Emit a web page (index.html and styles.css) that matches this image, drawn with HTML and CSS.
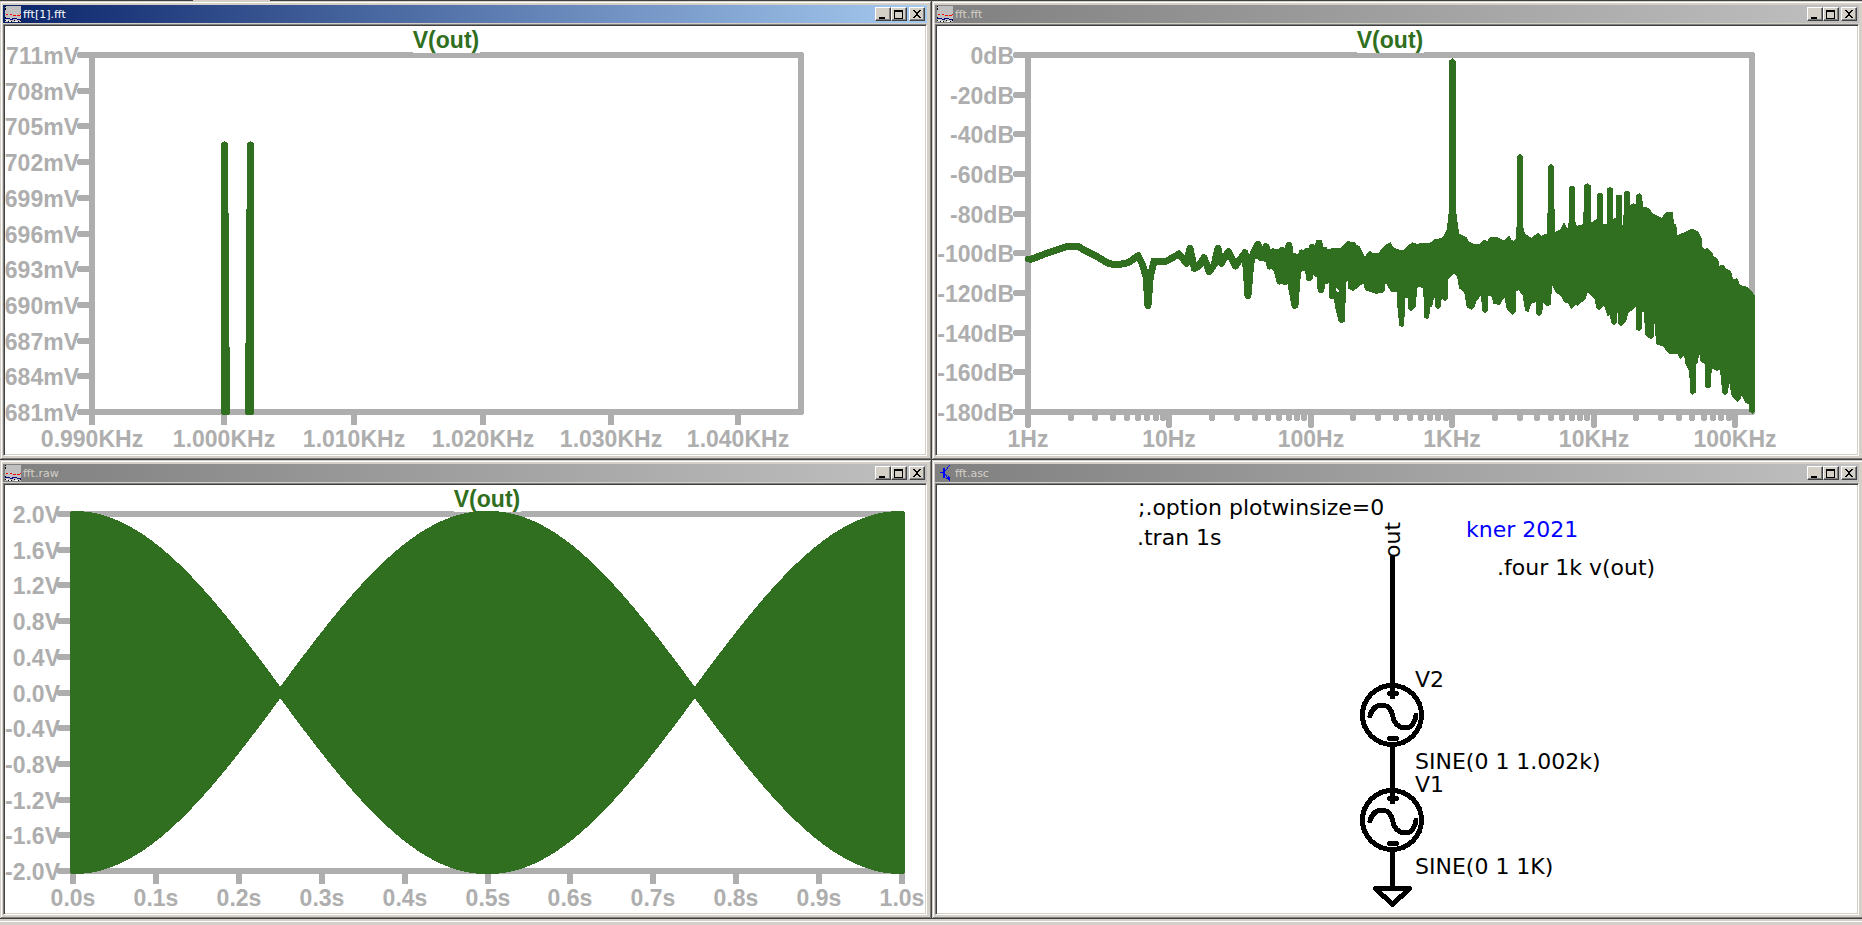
FILE: index.html
```html
<!DOCTYPE html>
<html lang="en">
<head>
<meta charset="utf-8">
<title>fft</title>
<link rel="stylesheet" href="styles.css">
</head>
<body>
<svg class="defs" aria-hidden="true">
  <symbol id="icon-plot" viewBox="0 0 16 16" shape-rendering="crispEdges">
    <path fill="#c0c0c0" d="M0 0h16v16H0z"/>
    <path fill="#000" d="M0 0h1v1H0zM0 2h1v2H0zM0 11h1v1H0zM0 14h1v1H0zM3 15h1v1H3zM6 15h1v1H6zM9 14h1v1H9zM13 15h1v1h-1zM15 14h1v1h-1z"/>
    <path fill="#f00" d="M1 8h2v1H1zM5 8h2v1H5zM8 9h3v1H8zM12 9h3v1h-3zM15 8h1v1h-1z"/>
    <path fill="#000080" d="M0 12h5v1H0zM5 13h3v1H5zM7 12h5v1H7zM12 13h4v1h-4z"/>
    <path fill="#fff" d="M1 14h2v1H1zM4 15h2v1H4zM10 15h3v1h-3z"/>
  </symbol>
  <symbol id="icon-schematic" viewBox="0 0 16 16" shape-rendering="crispEdges">
    <path fill="#00f" d="M6 3h2v10H6zM3 7h3v1H3zM8 5h1v1H8zM9 4h1v1H9zM10 2h1v2h-1zM11 1h1v1h-1zM12 0h1v1h-1zM8 9h1v1H8zM9 10h1v2H9zM10 12h1v1h-1zM11 11h1v2h-1zM9 13h4v1H9zM11 14h2v1h-2zM12 15h1v1h-1zM12 12h1v1h-1z"/>
  </symbol>
  <symbol id="glyph-min" viewBox="0 0 14 12" shape-rendering="crispEdges">
    <path d="M3 9h6v2H3z"/>
  </symbol>
  <symbol id="glyph-max" viewBox="0 0 14 12" shape-rendering="crispEdges">
    <path fill-rule="evenodd" d="M2 2h9v9H2zM3 4v6h7V4z"/>
  </symbol>
  <symbol id="glyph-close" viewBox="0 0 14 12" shape-rendering="crispEdges">
    <path d="M3 2h2v1h1v1h2V3h1V2h2v1h-1v1H9v1H8v2h1v1h1v1h1v1H9V9H8V8H6v1H5v1H3V9h1V8h1V7h1V5H5V4H4V3H3z"/>
  </symbol>
</svg>

<div class="desktop">
  <div class="edge"></div>
  <main class="windows">
    <section class="window active" aria-label="fft[1].fft">
      <header class="titlebar">
        <svg class="icon"><use href="#icon-plot"/></svg>
        <h2 class="name">fft[1].fft</h2>
        <button type="button" class="control" aria-label="Minimize"><svg><use href="#glyph-min"/></svg></button>
        <button type="button" class="control" aria-label="Maximize"><svg><use href="#glyph-max"/></svg></button>
        <button type="button" class="control close" aria-label="Close"><svg><use href="#glyph-close"/></svg></button>
      </header>
      <div class="client"><svg class="plot" id="plot-zoomed" viewBox="5 26 920 428"></svg></div>
    </section>

    <section class="window" aria-label="fft.fft">
      <header class="titlebar">
        <svg class="icon"><use href="#icon-plot"/></svg>
        <h2 class="name">fft.fft</h2>
        <button type="button" class="control" aria-label="Minimize"><svg><use href="#glyph-min"/></svg></button>
        <button type="button" class="control" aria-label="Maximize"><svg><use href="#glyph-max"/></svg></button>
        <button type="button" class="control close" aria-label="Close"><svg><use href="#glyph-close"/></svg></button>
      </header>
      <div class="client"><svg class="plot" id="plot-spectrum" viewBox="937 26 920 428"></svg></div>
    </section>

    <section class="window" aria-label="fft.raw">
      <header class="titlebar">
        <svg class="icon"><use href="#icon-plot"/></svg>
        <h2 class="name">fft.raw</h2>
        <button type="button" class="control" aria-label="Minimize"><svg><use href="#glyph-min"/></svg></button>
        <button type="button" class="control" aria-label="Maximize"><svg><use href="#glyph-max"/></svg></button>
        <button type="button" class="control close" aria-label="Close"><svg><use href="#glyph-close"/></svg></button>
      </header>
      <div class="client"><svg class="plot" id="plot-wave" viewBox="5 485 920 428"></svg></div>
    </section>

    <section class="window" aria-label="fft.asc">
      <header class="titlebar">
        <svg class="icon"><use href="#icon-schematic"/></svg>
        <h2 class="name">fft.asc</h2>
        <button type="button" class="control" aria-label="Minimize"><svg><use href="#glyph-min"/></svg></button>
        <button type="button" class="control" aria-label="Maximize"><svg><use href="#glyph-max"/></svg></button>
        <button type="button" class="control close" aria-label="Close"><svg><use href="#glyph-close"/></svg></button>
      </header>
      <div class="client">
        <svg class="plot schematic" viewBox="937 485 920 428">
          <defs>
            <g id="source">
              <circle cx="1392" cy="715" r="29.5"/>
              <path d="M1392.5 685V697M1389.5 693.5H1396.5M1389.5 738.5H1396.5"/>
              <path d="M1370 716C1372 708 1377 705 1383 705C1390 706 1392 711 1393 717C1394 723 1399 728 1405 728C1411 728 1415 723 1416 715"/>
            </g>
          </defs>
          <g class="wire">
            <path class="straight" d="M1392.5 556V685M1392.5 746V790M1392.5 851V888"/>
            <use href="#source"/>
            <use href="#source" y="105"/>
            <path d="M1375.5 888.5H1409.5L1392.5 904.5Z"/>
          </g>
          <text x="1138" y="515">;.option plotwinsize=0</text>
          <text x="1137" y="545">.tran 1s</text>
          <text class="comment" x="1466" y="537">kner 2021</text>
          <text x="1497" y="575">.four 1k v(out)</text>
          <text transform="translate(1400 558) rotate(-90)">out</text>
          <text x="1415" y="687">V2</text>
          <text x="1415" y="769">SINE(0 1 1.002k)</text>
          <text x="1415" y="792">V1</text>
          <text x="1415" y="874">SINE(0 1 1K)</text>
        </svg>
      </div>
    </section>
  </main>
  <footer class="status"></footer>
</div>
<script src="plots.js"></script>
</body>
</html>
```
FILE: styles.css
```css
* {
  box-sizing: border-box;
}

body {
  margin: 0;
  background: #d4d0c8;
  font-family: "DejaVu Sans", sans-serif;
  overflow: hidden;
}

.defs {
  position: absolute;
  width: 0;
  height: 0;
}

.desktop {
  display: flex;
  flex-direction: column;
  height: 100vh;
  overflow: hidden;
}

.edge {
  flex: none;
  height: 1px;
  background: linear-gradient(to right, #404040 193px, #d4d0c8 193px, #d4d0c8 270px, #404040 270px);
}

.windows {
  flex: 1;
  min-height: 0;
  display: grid;
  grid-template: 1fr 1fr / 1fr 1fr;
  margin-right: -2px;
}

.status {
  flex: none;
  height: 6px;
  border-top: 2px solid #d4d0c8;
  box-shadow: inset 0 1px #fff;
}

.window {
  display: flex;
  flex-direction: column;
  min-width: 0;
  min-height: 0;
  padding: 4px 5px 4px 3px;
  background: #d4d0c8;
  box-shadow: inset -1px -1px #404040, inset 1px 1px #d4d0c8, inset -2px -2px #808080, inset 2px 2px #fff;
}

.titlebar {
  flex: none;
  display: flex;
  align-items: center;
  height: 18px;
  margin-bottom: 1px;
  padding: 0 2px;
  background: linear-gradient(to right, #808080, #c0c0c0);
  color: #d4d0c8;
}

.active .titlebar {
  background: linear-gradient(to right, #0a246a, #a6caf0);
  color: #fff;
}

.icon {
  width: 16px;
  height: 16px;
}

.name {
  flex: 1;
  margin: 0;
  padding: 2px 0 0 2px;
  font-size: 11px;
  font-weight: normal;
  line-height: 16px;
}

.control {
  width: 16px;
  height: 14px;
  padding: 0;
  border: 1px solid;
  border-color: #fff #404040 #404040 #fff;
  background: #d4d0c8;
  box-shadow: inset -1px -1px #808080;
}

.control svg {
  display: block;
  width: 14px;
  height: 12px;
}

.close {
  margin-left: 2px;
}

.client {
  flex: 1;
  min-height: 0;
  border: 1px solid;
  border-color: #808080 #fff #fff #808080;
  background: #fff;
  box-shadow: inset 1px 1px #404040, inset -1px -1px #d4d0c8;
  padding: 1px;
}

.plot {
  display: block;
  width: 100%;
  height: 100%;
}

.axis {
  fill: none;
  stroke: #aeaeae;
  stroke-width: 6px;
  stroke-linejoin: round;
  shape-rendering: crispEdges;
}

.rounded {
  stroke-linecap: round;
}

.label,
.trace-name {
  font: bold 23px "Liberation Sans", sans-serif;
  fill: #aeaeae;
  text-anchor: middle;
}

.label.value {
  text-anchor: end;
}

.trace-name {
  fill: #306e20;
}

.backing {
  fill: #fff;
}

.trace {
  fill: none;
  stroke: #306e20;
  stroke-width: 6px;
  stroke-linejoin: round;
  stroke-linecap: round;
  shape-rendering: crispEdges;
}

.trace.noise {
  stroke-width: 7px;
}

.trace.solid {
  fill: #306e20;
}

.trace.area {
  fill: #306e20;
  stroke: none;
}

.schematic text {
  font-size: 22px;
  fill: #000;
}

.schematic .comment {
  fill: #00f;
}

.wire {
  fill: none;
  stroke: #000;
  stroke-width: 5px;
  stroke-linecap: round;
  stroke-linejoin: round;
  shape-rendering: crispEdges;
}

.straight {
  stroke-linecap: butt;
}
```
FILE: plots.js
```js
const NS = "http://www.w3.org/2000/svg";

function add(parent, tag, cls, attrs, text) {
  const el = document.createElementNS(NS, tag);
  if (cls) el.setAttribute("class", cls);
  for (const key in attrs) el.setAttribute(key, attrs[key]);
  if (text) el.textContent = text;
  parent.appendChild(el);
  return el;
}

function frame(svg, o) {
  add(svg, "path", "axis", { d: `M${o.left} ${o.top}H${o.right}V${o.bottom}H${o.left}Z` });
  const step = (o.bottom - o.top) / (o.values.length - 1);
  o.values.forEach((v, i) => {
    const y = Math.round(o.top + i * step);
    add(svg, "text", "label value", { x: o.labelEnd, y: y + 9 }, v);
    add(svg, "path", "axis rounded", { d: `M${o.tickStart} ${y}H${o.left}` });
  });
  o.marks.forEach(([x, name]) => {
    add(svg, "path", o.log ? "axis rounded" : "axis", { d: `M${x} ${o.bottom}V${o.bottom + 13}` });
    add(svg, "text", "label", { x, y: o.bottom + 35 }, name);
  });
  add(svg, "rect", "backing", { x: o.title - 33, y: o.top - 25, width: 67, height: 23 });
}

function title(svg, x, y) {
  add(svg, "text", "trace-name", { x, y }, "V(out)");
}

const zoomed = document.getElementById("plot-zoomed");
frame(zoomed, {
  left: 92, right: 801, top: 55, bottom: 412, labelEnd: 79, tickStart: 80, title: 446,
  values: [711, 708, 705, 702, 699, 696, 693, 690, 687, 684, 681].map(v => v + "mV"),
  marks: [[92, "0.990KHz"], [224, "1.000KHz"], [354, "1.010KHz"], [483, "1.020KHz"], [611, "1.030KHz"], [738, "1.040KHz"]]
});
add(zoomed, "path", "trace solid", { d: "M224 412V145L224.5 144.5L225 145L227 412ZM248 412L250 145L250.5 144.5L251 145V412Z" });
title(zoomed, 446, 48);

const spectrum = document.getElementById("plot-spectrum");
const decade = 141.4;
for (let d = 0; d < 6; d++) {
  for (let n = 2; n < 10; n++) {
    const x = Math.round(1028 + decade * (d + Math.log10(n)));
    if (x < 1752) add(spectrum, "path", "axis rounded", { d: `M${x} 412V418` });
  }
}
frame(spectrum, {
  left: 1028, right: 1752, top: 55, bottom: 412, labelEnd: 1014, tickStart: 1016, title: 1390, log: true,
  values: [0, -20, -40, -60, -80, -100, -120, -140, -160, -180].map(v => v + "dB"),
  marks: [[1028, "1Hz"], [1169, "10Hz"], [1311, "100Hz"], [1452, "1KHz"], [1594, "10KHz"], [1735, "100KHz"]]
});

// Samples are stored in thirds of a pixel, relative to each block's origin.
function samples(ox, oy, text) {
  return text.trim().split(/\s+/).map(p => {
    const [x, y] = p.split(",").map(Number);
    return (ox + x / 3).toFixed(1) + "," + (oy + y / 3).toFixed(1);
  }).join(" ");
}

add(spectrum, "polyline", "trace noise", { points: samples(1020, 200, `
  26,177 35,177 80,160 140,140 175,140 205,157 235,172 265,190 290,195 325,188 354,167 368,195 378,230
  384,316 391,230 402,183 440,183 477,162 500,190 510,145 523,205 535,200 552,173 568,215 583,193 594,145 604,190
  625,155 646,198 675,158 684,286 692,190 700,160 714,133 722,172 738,140 750,198 760,155 768,198 780,243 786,152
  796,245 807,137 815,265 825,316 832,225 846,159 854,203 862,154 868,233 877,142 890,220 897,129 903,268
  912,150 920,241 936,156 936,286 950,285 958,330 965,358 969,150 985,134 980,226`) });
add(spectrum, "polygon", "trace area", { points: samples(1020, 200,
  "700,150 745,145 800,150 840,165 890,150 990,140 990,235 955,270 890,210 850,210 815,255 785,250 745,190 705,175") });
add(spectrum, "polygon", "trace area", { points: samples(1350, 40, `
  -6,610 0,606 15,607 18,613 30,620 37,635 45,650 52,638 60,631 68,638 85,640 95,625 110,612 122,606 130,622
  145,628 160,632 172,618 188,607 200,611 240,608 256,596 262,598 278,592 290,570 297,510 297,62 307,55 317,62
  318,510 327,580 350,592 356,603 370,612 388,612 402,598 412,603 422,590 440,590 452,597 462,602 477,586
  484,600 490,602 497,597 501,540 501,348 510,342 519,348 520,560 525,582 545,594 564,577 575,587 592,580
  594,378 603,372 611,378 613,490 616,575 632,567 642,547 652,567 657,540 657,442 666,436 675,442 675,540
  680,558 700,552 702,436 712,430 722,436 723,548 740,537 741,462 750,457 759,462 760,552 771,552 771,446
  780,441 789,446 790,537 798,533 798,467 807,463 816,467 816,555 820,555 822,457 831,451 840,457 840,495
  850,490 858,493 859,465 868,460 877,465 878,500 886,500 900,508 908,520 917,525 935,533 943,522 950,517
  968,517 972,550 979,555 982,585 1000,578 1027,566 1045,575 1055,595 1057,620 1063,627 1072,625 1088,640
  1090,648 1105,658 1108,678 1120,673 1128,686 1142,692 1150,718 1162,715 1170,735 1190,740 1205,752 1215,768
  1215,1115 1207,1121 1198,1115 1196,1092 1187,1090 1175,1067 1170,1080 1162,1087 1145,1067 1138,1030
  1133,1060 1125,1067 1117,1060 1110,990 1100,993 1085,985 1083,1040 1074,1046 1065,1040 1064,972 1052,965
  1048,940 1043,970 1038,972 1037,1058 1028,1064 1020,1058 1018,995 1005,970 1003,947 991,958 982,942 957,942
  940,920 918,913 914,845 911,890 903,898 885,885 882,815 877,815 875,868 867,875 858,868 858,800 835,820
  828,845 813,860 805,852 803,812 800,850 791,857 783,848 780,825 773,830 762,795 754,805 747,811 738,803
  735,780 713,757 705,780 697,785 684,798 676,795 663,808 654,790 645,790 632,768 615,755 606,733 603,793
  594,800 580,790 576,822 567,830 558,820 557,787 543,792 535,817 525,812 518,765 505,750 498,755 497,815
  488,826 470,808 463,772 450,795 430,792 426,770 414,768 413,812 405,820 397,812 393,767 380,782 374,800
  366,810 350,803 343,757 327,745 322,712 312,702 295,718 293,775 285,785 275,775 272,800 264,808 256,800
  253,765 247,800 240,802 238,832 231,838 222,832 220,745 208,740 200,745 199,800 182,814 175,805 173,773
  165,773 163,857 155,862 148,857 142,798 140,757 122,755 107,727 103,757 78,762 45,750 40,730 10,753
  -6,745`) });
title(spectrum, 1390, 48);

const wave = document.getElementById("plot-wave");
frame(wave, {
  left: 73, right: 902, top: 514, bottom: 871, labelEnd: 60, tickStart: 60, title: 487,
  values: ["2.0V", "1.6V", "1.2V", "0.8V", "0.4V", "0.0V", "-0.4V", "-0.8V", "-1.2V", "-1.6V", "-2.0V"],
  marks: Array.from({ length: 11 }, (_, i) => [Math.round(73 + i * 82.9), (i / 10).toFixed(1) + "s"])
});
const upper = [];
const lower = [];
for (let x = 73; x <= 902; x++) {
  const level = 178 * Math.abs(Math.cos(2 * Math.PI * (x - 73) / 829));
  upper.push(`${x},${Math.round(692 - level)}`);
  lower.unshift(`${x},${Math.round(693 + level)}`);
}
add(wave, "polygon", "trace solid", { points: upper.concat(lower).join(" ") });
title(wave, 487, 507);
```
